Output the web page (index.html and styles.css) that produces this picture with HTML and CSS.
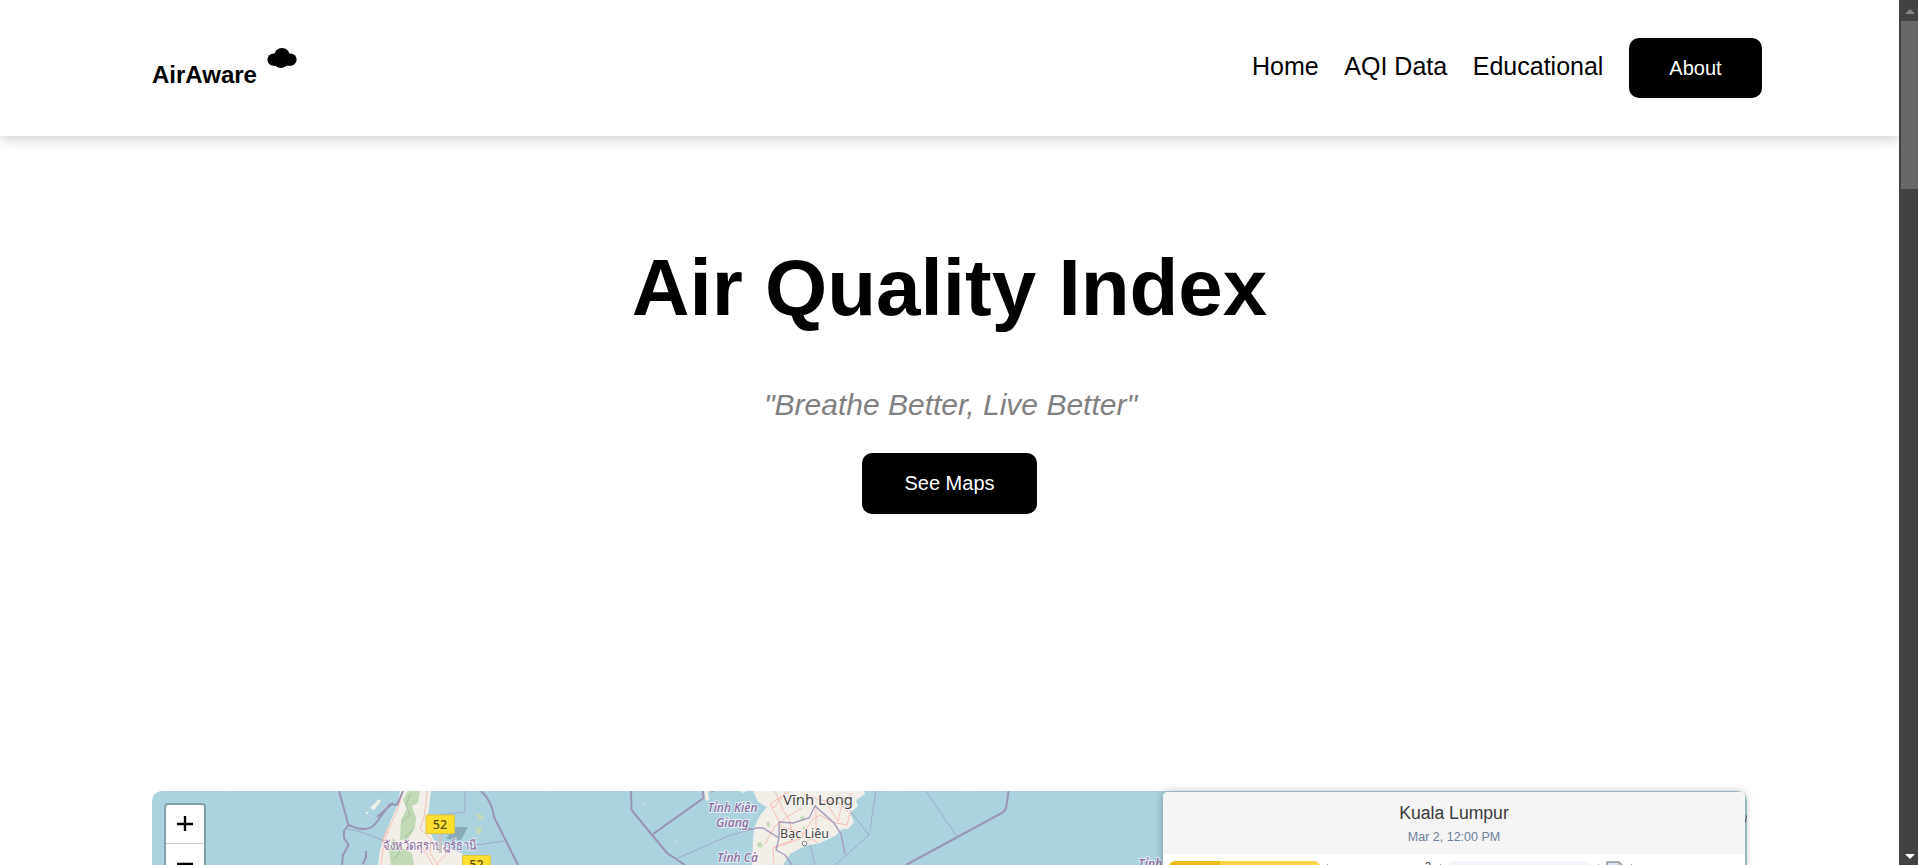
FILE: index.html
```html
<!DOCTYPE html>
<html lang="en">
<head>
<meta charset="utf-8">
<title>AirAware</title>
<link rel="stylesheet" href="styles.css">
</head>
<body>
<div class="page">
  <header class="header">
    <div class="logo">
      <span class="logo-name">AirAware</span>
      <svg class="logo-cloud" viewBox="0 0 30 20"><circle cx="6.6" cy="11.600" r="6.2"/><circle cx="15" cy="7.8" r="7.8"/><circle cx="23.4" cy="11.600" r="6.2"/><ellipse cx="14" cy="14" rx="7" ry="6"/><path d="M6 10h18v7.600H6z"/></svg>
    </div>
    <nav class="nav">
      <a class="nav-link">Home</a>
      <a class="nav-link">AQI Data</a>
      <a class="nav-link">Educational</a>
      <a class="button button-about">About</a>
    </nav>
  </header>
  <main class="main">
    <section class="hero">
      <h1 class="title">Air Quality Index</h1>
      <p class="tagline">"Breathe Better, Live Better"</p>
      <a class="button button-maps">See Maps</a>
    </section>
    <section class="map">
      <svg class="map-canvas" viewBox="152 791 1595 74">
        <g class="land">
          <path d="M400 791 397 806 391 820 384 838 380 850 378 865H466L462 853 448 848 434 840 429 830 428 815 430 800 431 791Z"/>
          <path d="M753 791 758 802 767 807 759 817 754 828 753 840 752 865H783L790 854 805 846 820 843 835 836 842 829 848 829 854 822 850 813 858 806 856 800 865 794 864 791Z"/>
          <path d="M704 791 706 801 709 800 708 791ZM370 808l9-9 2 2-7 9zM366 812l2 0 0 2-2 0zM740 791l6 0-3 2z"/>
        </g>
        <g class="wood">
          <path d="M408 791 403 800 407 808 401 820 400 840 408 839 415 828 416 818 412 806 418 803 420 791Z"/>
          <path d="M393 838 389 850 391 865H414L412 853 402 848ZM476 814l5 0 3 5-5 1zM475 827l7 0-1 6-4 2zM766 823l3-2 1 5-2 2zM757 843l4-1 2 4-3 2-3-2zM800 817l3-1 2 2-4 2zM803 827l2-1 0 3-3 0zM464 857l6-2 4 10h-10z"/>
        </g>
        <path class="ridge" d="M410 794 406 805 410 815 402 822M395 842 400 852 393 860M405 838 413 829"/>
        <g class="road">
          <path d="M403 791 398 808 391 824 384 842 381 865M427 791 426 803 424 817 420 829 431 839 430 853 438 865M436 865 450 850M388 827 381 844M422 847 433 865"/>
          <path d="M790 791 770 804 774 808 785 792M775 791 783 810 790 821 793 840 773 848 774 865M773 848 800 839 812 820 820 815 832 822 847 825 850 814 838 802 820 800 804 794M802 808 787 817 775 826 765 844M816 805 816 833 807 842M829 807 838 821 842 804 852 793M770 804 782 827 800 832 818 843"/>
        </g>
        <g class="border-strong">
          <path d="M339 791 348.5 825 344 831 344 838 348.5 845 343 855 342 865M348.5 825Q368 834 376 823T390 804L397 805 403 791M366 851 366 857 363 864M377 817 393 803"/>
          <path d="M481 791Q492 801 494 817L518 865M631 791 631.5 810 652 835 667 853 685 865M703 791 703.5 798 653 834M1008.5 791 1006.5 806Q1005.5 811 1002 813L906 865"/>
        </g>
        <path class="border-mid" d="M755 828 763 828 779 838 776 850 785 855 792 865M779 838 779 822 793 823 809 818 815 806 834 823 841 834 845 854M740 829 755 829M711 792 714 791"/>
        <path class="border-thin" d="M348 829Q362 831 384 841M465 791V812L440 815M476 845 505 841M678 858 728 836 753 829M876 791 869 835 835 865M869 835 842 800M810 845 815 865M926 791 957.5 837"/>
        <path class="tile-seam" d="M229.500 791V865M549.500 791V865M869.500 791V865"/>
        <path class="sea-dots" d="M390 845h0M356 835h0M675 842 678 841M642 805 645 804M894 791h4M966 791h4"/>
        <path class="pin-shadow" d="M446 839 454 827H468L461 840Z"/>
        <g class="label-region">
          <text class="label-thai" x="383" y="850" textLength="94" lengthAdjust="spacingAndGlyphs">จังหวัดสุราษฎร์ธานี</text>
          <text x="707.500" y="812" textLength="50" lengthAdjust="spacingAndGlyphs">Tỉnh Kiên</text>
          <text x="716" y="827" textLength="33" lengthAdjust="spacingAndGlyphs">Giang</text>
          <text x="717" y="861.500" textLength="41" lengthAdjust="spacingAndGlyphs">Tỉnh Cà</text>
          <text x="1138" y="868">Tỉnh</text>
        </g>
        <text class="label-city" x="783" y="804.500" textLength="70" lengthAdjust="spacingAndGlyphs">Vĩnh Long</text>
        <text class="label-town" x="780" y="838" textLength="49" lengthAdjust="spacingAndGlyphs">Bạc Liêu</text>
        <circle class="town-dot" cx="804.500" cy="843.500" r="2.300"/>
        <path class="pin-post" d="M440.300 833V853"/>
        <rect class="pin" x="426" y="815" width="28.500" height="18.500" rx="1"/>
        <text class="pin-value" x="440" y="828.500">52</text>
        <rect class="pin" x="462.500" y="855.500" width="28" height="18.500" rx="1"/>
        <text class="pin-value" x="476.500" y="869">52</text>
        <path class="edge-mark" d="M1745 823 1747 815"/>
      </svg>
      <div class="zoom-control">
        <span class="zoom-button"><svg viewBox="0 0 16 16"><path d="M0 8H16M8 0V15"/></svg></span>
        <span class="zoom-button"><svg viewBox="0 0 16 16"><path d="M0 8H16"/></svg></span>
      </div>
    </section>
    <aside class="popup">
      <div class="popup-head">
        <div class="popup-city">Kuala Lumpur</div>
        <div class="popup-date">Mar 2, 12:00 PM</div>
      </div>
      <div class="popup-row">
        <span class="aqi-bar"></span>
        <span class="tick tick-first"></span>
        <span class="unit">2</span>
        <span class="tick"></span>
        <span class="value-bar"></span>
        <span class="tick"></span>
        <svg class="broken-image" viewBox="0 0 18 16"><path class="picture" d="M1 1H13V16H1Z"/><path class="sheet" d="M1 16V1H13L17 5"/><path class="fold" d="M13 1V5H17.500"/></svg>
        <span class="tick"></span>
      </div>
    </aside>
  </main>
</div>
<div class="scrollbar">
  <svg class="arrow arrow-up" viewBox="0 0 10 6"><path d="M5 0 10 5H0Z"/></svg>
  <div class="thumb"></div>
  <svg class="arrow arrow-down" viewBox="0 0 10 6"><path d="M0 0H10L5 5Z"/></svg>
</div>
</body>
</html>
```

FILE: styles.css
```css
* { box-sizing: border-box; }
body {
  margin: 0;
  display: flex;
  height: 865px;
  overflow: hidden;
  background: #fff;
  color: #000;
  font-family: "Liberation Sans", Arial, sans-serif;
}
.page { width: 1899px; height: 865px; overflow: hidden; flex: none; }
.header {
  height: 136px;
  padding: 38px 137px 0 152px;
  display: flex;
  justify-content: space-between;
  align-items: flex-start;
  box-shadow: 0 4px 12px rgba(0, 0, 0, .17);
}
.logo { display: flex; align-items: flex-start; gap: 10px; padding-top: 10px; }
.logo-name { font-size: 24px; font-weight: 700; line-height: 28px; margin-top: 13px; }
.logo-cloud { width: 30px; height: 20px; }
.nav { display: flex; align-items: flex-start; gap: 25.600px; }
.nav-link { font-size: 25px; line-height: 30px; margin-top: 13px; }
.button {
  display: flex;
  align-items: center;
  justify-content: center;
  height: 60px;
  border-radius: 10px;
  background: #000;
  color: #fff;
  font-size: 20px;
}
.button-about { width: 133px; }
.button-maps { width: 175px; height: 61px; }
.main { position: relative; }
.hero { height: 655px; padding-top: 106px; display: flex; flex-direction: column; align-items: center; }
.title { margin: 0; font-size: 80px; line-height: 92px; }
.tagline { margin: 53px 0 31px; padding-left: 2px; font-size: 30px; line-height: 35px; font-style: italic; color: #808080; }
.map {
  position: relative;
  width: 1595px;
  height: 74px;
  margin-left: 152px;
  overflow: hidden;
  border-radius: 10px 10px 0 0;
  background: #aad3df;
}
.map-canvas { display: block; width: 1595px; height: 74px; fill: none; font-family: "Noto Sans", "Open Sans", sans-serif; }
.land { fill: #f2efe9; }
.wood { fill: #bfdab4; }
.ridge { stroke: #a5bda5; stroke-width: 1; }
.road { stroke: #f8bdb0; stroke-width: 1; }
.border-strong { stroke: #9b93b5; stroke-width: 2; }
.border-mid { stroke: #a79bbd; stroke-width: 1.4; }
.border-thin { stroke: #9c9fbd; stroke-width: .8; }
.tile-seam { stroke: #b7d9e2; stroke-width: .6; }
.sea-dots { stroke: #c3dbdd; stroke-width: 1.600; stroke-linecap: round; }
.label-region { fill: #8d6a9e; font-size: 12.500px; font-style: italic; font-weight: 500; stroke: rgba(255, 255, 255, .65); stroke-width: 2; paint-order: stroke; }
.label-thai { font-style: normal; font-weight: 400; font-size: 13px; }
.label-city, .label-town { fill: #444; stroke: rgba(255, 255, 255, .65); stroke-width: 2; paint-order: stroke; font-weight: 400; }
.label-city { font-size: 15px; }
.label-town { font-size: 13px; }
.town-dot { fill: #fff; stroke: #666; stroke-width: .8; }
.pin-shadow { fill: rgba(60, 80, 90, .3); }
.pin-post { stroke: #c6c6c1; stroke-width: 3; }
.pin { fill: #ffdf2e; stroke: #e2c23a; stroke-width: 1; }
.pin-value { fill: #5a4c10; font-size: 12.500px; font-weight: 500; text-anchor: middle; }
.edge-mark { stroke: #57656b; }
.zoom-control {
  position: absolute;
  left: 12px;
  top: 12px;
  width: 42px;
  border: 2px solid rgba(0, 0, 0, .24);
  border-radius: 4px;
  background: #fff;
  background-clip: padding-box;
}
.zoom-button { display: flex; height: 39px; align-items: center; justify-content: center; }
.zoom-button:first-child { height: 39px; border-bottom: 1px solid #ccc; }
.zoom-button svg { width: 16px; height: 16px; fill: none; stroke: #000; stroke-width: 2.400; }
.popup {
  position: absolute;
  left: 1163px;
  top: 656px;
  width: 582px;
  height: 90px;
  overflow: hidden;
  border-radius: 5px;
  background: #fff;
  box-shadow: 0 0 9px rgba(0, 0, 0, .3);
  text-align: center;
}
.popup-head { height: 62px; padding-top: 10px; background: #f5f5f5; }
.popup-city { font-size: 17.600px; line-height: 22px; color: #3b3b3b; }
.popup-date { margin-top: 6px; font-size: 12.500px; line-height: 15px; color: #6b7f99; }
.popup-row { display: flex; align-items: flex-start; padding: 7px 0 0 6px; }
.aqi-bar { width: 151px; height: 24px; border-radius: 6px; background: linear-gradient(90deg, #eebb1c 51px, #fdd54a 51px); }
.tick { width: 1px; height: 1px; margin-top: 3px; background: #999; }
.tick-first { margin-left: 7px; }
.unit { width: 8px; margin: 0 8px 0 96px; font-size: 11px; line-height: 11px; color: #333; }
.value-bar { width: 143px; height: 24px; margin: 0 7px; border-radius: 6px; background: #f1f5fb; }
.broken-image { width: 18px; height: 16px; margin: 0 7px; fill: none; }
.sheet { stroke: #999; stroke-width: 1.500; }
.picture { fill: #d6e4f8; }
.fold { stroke: #999; }
.scrollbar { width: 19px; height: 865px; flex: none; display: flex; flex-direction: column; align-items: center; padding: 9px 0 5px 2px; background: #424242; }
.arrow { width: 10px; height: 6px; flex: none; }
.arrow-up { fill: #868686; }
.arrow-down { fill: #fff; margin-top: auto; }
.thumb { width: 17px; height: 168px; margin-top: 6px; background: #686868; }
```
